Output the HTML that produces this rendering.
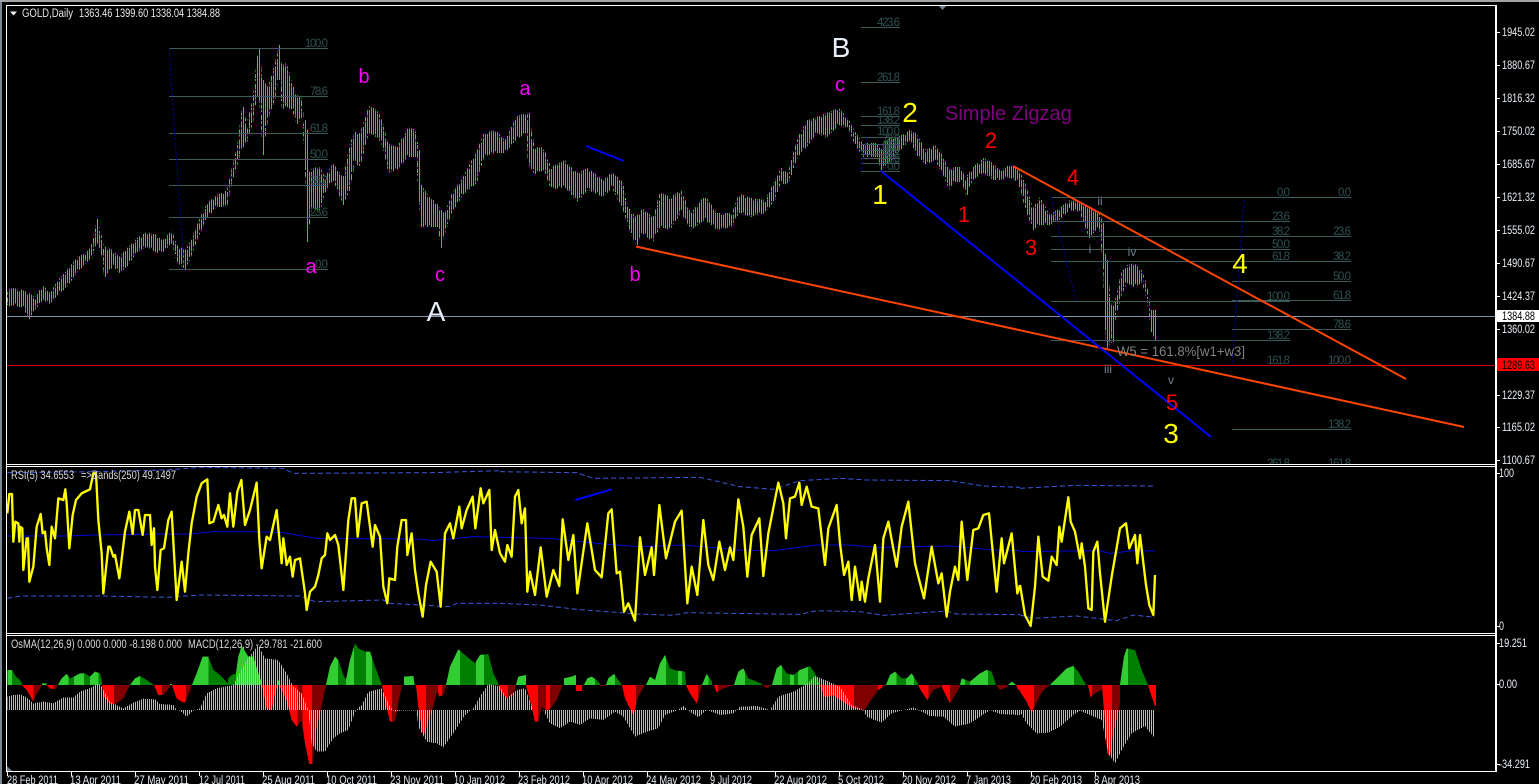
<!DOCTYPE html>
<html><head><meta charset="utf-8"><title>GOLD,Daily</title>
<style>
html,body{margin:0;padding:0;background:#000;width:1539px;height:784px;overflow:hidden}
svg{display:block;font-family:"Liberation Sans",sans-serif}
.ax text{fill:#e8eef4;font-size:11.5px}
.fb text{fill:#2f4f4f;font-size:11.5px;text-anchor:end}
.fl line{stroke:#3c5c5c;stroke-width:1;shape-rendering:crispEdges}
.mg text{fill:#f0f;font-size:20px;text-anchor:middle}
.rd text{fill:#f00;font-size:22px;text-anchor:middle}
.yl text{fill:#ff0;font-size:28px;text-anchor:middle}
.wt text{fill:#e6eefa;font-size:28px;text-anchor:middle}
.rm text{fill:#708090;font-size:12px;text-anchor:middle}
.dt text{fill:#e8eef4;font-size:11.5px}
</style></head><body>
<svg width="1539" height="784" viewBox="0 0 1539 784" xmlns="http://www.w3.org/2000/svg">
<defs>
<pattern id="b" patternUnits="userSpaceOnUse" width="2" height="4"><rect x="1" y="0" width="1" height="4" fill="#1fe01f" shape-rendering="crispEdges"/></pattern>
<pattern id="g" patternUnits="userSpaceOnUse" width="6" height="12"><rect x="3" y="0" width="3" height="12" fill="#bcbcbc" shape-rendering="crispEdges"/></pattern>
<clipPath id="h4">
<polygon points="22,675 22,630 36,630 48,650 60,660 66,672 66,675"/>
<polygon points="66,675 80,690 95,715 100,725 105,710 115,695 126,675"/>
<polygon points="126,675 126,670 140,670 140,675"/>
<polygon points="140,675 150,685 165,688 174,675"/>
<polygon points="174,675 185,655 200,642 210,655 222,650 240,640 255,640 270,650 285,635 300,640 306,665 306,675"/>
<polygon points="306,675 312,710 330,730 345,733 370,715 385,685 390,675"/>
<polygon points="390,675 405,655 420,648 440,660 462,675"/>
<polygon points="462,675 475,705 490,705 510,680 510,675"/>
<polygon points="510,675 510,672 516,672 516,675"/>
<polygon points="516,675 530,715 545,725 555,728 570,690 576,675"/>
<polygon points="576,675 590,640 608,590 625,590 640,630 660,645 684,670 684,675"/>
<polygon points="684,675 684,655 695,645 708,640 715,590 725,558 745,590 760,590 775,640 786,670 786,675"/>
<polygon points="786,675 800,745 815,750 825,700 832,675"/>
<polygon points="832,675 832,662 838,662 838,675"/>
<polygon points="838,675 860,720 875,780 890,800 905,780 915,850 928,912 938,912 950,800 965,740 978,675"/>
<polygon points="978,675 990,620 1005,590 1015,600 1030,645 1038,660 1050,600 1065,550 1075,565 1095,575 1110,575 1125,620 1140,660 1146,675"/>
<polygon points="1146,675 1155,720 1170,785 1185,785 1195,730 1206,675"/>
<polygon points="1212,675 1212,650 1240,648 1244,675"/>
<polygon points="1248,675 1255,740 1270,830 1285,780 1300,740 1312,690 1318,710 1330,705 1338,675"/>
<polygon points="1338,675 1350,620 1375,568 1395,585 1425,610 1440,585 1465,582 1480,640 1495,670 1495,675"/>
<polygon points="1495,675 1495,680 1500,680 1500,675"/>
</clipPath>
<clipPath id="h5">
<polygon points="0,675 0,690 20,715 40,705 48,675"/>
<polygon points="48,675 55,650 78,645 78,675"/>
<polygon points="78,675 90,720 105,785 115,785 125,740 138,750 150,748 170,720 186,680 186,675"/>
<polygon points="192,675 192,655 215,650 228,645 228,675"/>
<polygon points="228,675 228,693 246,693 246,675"/>
<polygon points="252,675 262,655 275,650 290,660 300,672 300,675"/>
<polygon points="300,675 300,678 318,678 318,675"/>
<polygon points="318,675 325,655 342,642 355,660 366,675"/>
<polygon points="366,675 375,715 400,765 415,710 432,680 432,675"/>
<polygon points="438,675 450,650 465,660 480,610 495,585 510,625 530,632 555,635 558,675"/>
<polygon points="558,675 570,700 590,730 600,700 606,675"/>
<polygon points="606,675 620,642 636,665 636,675"/>
<polygon points="642,675 650,697 670,685 702,675"/>
<polygon points="702,675 715,635 730,625 745,655 770,665 786,672 786,675"/>
<polygon points="786,675 800,685 816,675"/>
<polygon points="816,675 830,625 843,615 860,640 880,645 900,630 930,618 945,640 960,675"/>
<polygon points="960,675 975,712 1000,705 1030,725 1060,745 1092,752 1110,725 1135,690 1158,675"/>
<polygon points="1158,675 1170,645 1185,635 1205,655 1220,655 1235,640 1254,670 1254,675"/>
<polygon points="1254,675 1265,695 1282,720 1300,690 1325,680 1350,730 1380,680 1380,675"/>
<polygon points="1380,675 1385,655 1410,665 1440,640 1460,630 1475,635 1488,675"/>
<polygon points="1488,675 1500,690 1524,680 1524,675"/>
<polygon points="1524,675 1536,665 1548,675"/>
<polygon points="1548,675 1555,690 1560,690 1560,675"/>
</clipPath>
<clipPath id="h6">
<polygon points="0,675 0,695 20,725 35,758 55,715 70,690 90,675"/>
<polygon points="90,675 115,650 140,625 160,618 175,635 198,675"/>
<polygon points="204,675 212,712 225,700 246,690 246,675"/>
<polygon points="246,675 255,790 262,880 270,890 280,820 300,735 300,675"/>
<polygon points="300,675 312,590 320,565 345,570 365,630 384,675"/>
<polygon points="384,675 395,710 405,738 408,738 408,675"/>
</clipPath>
</defs>

<rect width="1539" height="784" fill="#000"/>
<rect x="0" y="0" width="1539" height="2" fill="#a4a4a4"/>
<rect x="0" y="2" width="2" height="782" fill="#7c8894"/>

<!-- price bars -->
<polygon fill="url(#b)" stroke="#000" stroke-width="4" stroke-dasharray="2 3 1 5 3 2 1 4 2 6" shape-rendering="crispEdges" points="7,290 13,288 23,290 29,293 35,297 43,285 50,293 58,280 67,270 77,257 87,252 92,243 97,219 102,237 104,247 113,250 119,257 127,248 137,238 147,232 157,235 163,240 172,230 177,245 185,250 190,242 198,222 207,203 217,195 227,190 232,167 237,147 242,107 247,122 253,97 257,57 259,49 263,80 268,87 275,63 279,45 282,65 287,63 292,83 297,95 302,98 304,120 306,130 308,173 312,168 320,167 325,177 333,163 343,177 350,143 355,132 360,133 369,106 378,110 383,123 388,143 397,147 408,127 416,130 419,150 421,185 430,197 438,205 441,210 445,213 452,193 463,177 477,150 484,133 495,130 505,140 516,117 526,112 528,113 535,147 544,148 551,167 565,160 577,173 588,168 603,180 612,172 623,182 628,207 636,217 642,208 653,217 660,192 670,197 681,190 691,213 705,195 717,213 732,213 739,193 751,198 765,200 775,180 781,168 788,173 791,160 798,137 807,120 817,117 826,113 839,108 849,120 854,130 863,143 877,143 881,150 888,137 898,137 910,130 916,133 926,150 935,145 944,157 949,170 955,167 961,167 966,177 973,167 984,158 993,163 999,170 1010,165 1018,168 1025,182 1033,208 1040,197 1050,215 1059,208 1070,200 1080,202 1089,207 1099,212 1103,223 1106,260 1112,307 1116,297 1121,273 1127,265 1134,263 1142,270 1147,285 1151,310 1156,310 1156,340 1151,332 1147,300 1142,283 1134,287 1127,283 1121,297 1116,317 1112,342 1106,348 1103,268 1099,227 1089,238 1080,213 1070,210 1059,220 1050,225 1040,225 1033,230 1025,208 1018,182 1010,178 999,180 993,180 984,173 973,180 966,195 961,182 955,182 949,190 944,177 935,160 926,165 916,155 910,140 898,153 888,163 881,170 877,157 863,157 854,143 849,130 839,125 826,138 817,133 807,147 798,157 791,175 788,185 781,183 775,200 765,213 751,217 739,213 732,227 717,230 705,220 691,230 681,213 670,230 660,227 653,242 642,233 636,245 628,227 623,210 612,188 603,197 588,190 577,202 565,187 551,190 544,170 535,175 528,163 526,133 516,140 505,153 495,153 484,157 477,183 463,195 452,213 445,233 441,248 438,227 430,227 421,227 419,200 416,157 408,157 397,170 388,173 383,147 378,138 369,133 360,167 355,163 350,190 343,205 333,180 325,193 320,212 312,207 308,242 306,193 304,147 302,117 297,125 292,110 287,107 282,110 279,78 275,100 268,120 263,155 259,97 257,97 253,123 247,143 242,147 237,167 232,183 227,207 217,207 207,218 198,238 190,260 185,269 177,263 172,243 163,252 157,253 147,247 137,252 127,267 119,273 113,267 104,277 102,257 97,243 92,257 87,262 77,273 67,287 58,295 50,304 43,300 35,310 29,319 23,308 13,305 7,307"/>
<!-- solid spike bars -->
<path stroke="#1fe01f" stroke-width="1" fill="none" shape-rendering="crispEdges" d="M29.500 295V319M97.500 219V243M105.500 247V277M185.500 250V269M243.500 107V147M257.500 57V97M259.500 49V97M263.500 80V155M279.500 45V78M305.500 120V170M307.500 130V242M343.500 177V205M419.500 150V200M421.500 185V227M441.500 210V248M529.500 113V163M637.500 217V245M791.500 160V175M881.500 150V170M967.500 177V195M1033.500 208V230M1089.500 207V238M1103.500 223V268M1105.500 255V330M1107.500 260V348M1109.500 300V340M1113.500 307V342M1151.500 310V332M1153.500 310V336M1155.500 310V340"/>

<!-- price lines -->
<rect x="7" y="316" width="1488" height="1" fill="#8494a4"/>
<rect x="7" y="365" width="1488" height="1" fill="#d80000"/>

<!-- fibonacci lines -->
<g class="fl">
<line x1="169" x2="328" y1="48.5" y2="48.5"/><line x1="169" x2="328" y1="96.5" y2="96.5"/><line x1="169" x2="328" y1="133.5" y2="133.5"/><line x1="169" x2="328" y1="159.5" y2="159.5"/><line x1="169" x2="328" y1="185.5" y2="185.5"/><line x1="169" x2="328" y1="217.5" y2="217.5"/><line x1="169" x2="328" y1="269.5" y2="269.5"/>
<line x1="861" x2="900" y1="27.5" y2="27.5"/><line x1="861" x2="900" y1="82.5" y2="82.5"/><line x1="861" x2="900" y1="116.5" y2="116.5"/><line x1="861" x2="900" y1="125.5" y2="125.5"/><line x1="861" x2="900" y1="137.5" y2="137.5"/><line x1="861" x2="900" y1="144.5" y2="144.5"/><line x1="861" x2="900" y1="150.5" y2="150.5"/><line x1="861" x2="900" y1="154.5" y2="154.5"/><line x1="861" x2="900" y1="158.5" y2="158.5"/><line x1="861" x2="900" y1="163.5" y2="163.5"/><line x1="861" x2="900" y1="171.5" y2="171.5"/>
<line x1="1051" x2="1351" y1="197.5" y2="197.5"/><line x1="1051" x2="1290" y1="221.5" y2="221.5"/><line x1="1051" x2="1351" y1="236.5" y2="236.5"/><line x1="1051" x2="1290" y1="249.5" y2="249.5"/><line x1="1051" x2="1351" y1="261.5" y2="261.5"/><line x1="1051" x2="1290" y1="301.5" y2="301.5"/><line x1="1051" x2="1290" y1="340.5" y2="340.5"/>
<line x1="1232" x2="1351" y1="281.5" y2="281.5"/><line x1="1232" x2="1351" y1="300.5" y2="300.5"/><line x1="1232" x2="1351" y1="329.5" y2="329.5"/><line x1="1232" x2="1351" y1="429.5" y2="429.5"/>
</g>
<g class="fb">
<text x="328" y="47" textLength="23">100.0</text><text x="328" y="95" textLength="18">78.6</text><text x="328" y="132" textLength="18">61.8</text><text x="328" y="158" textLength="18">50.0</text><text x="328" y="184" textLength="18">38.2</text><text x="328" y="216" textLength="18">23.6</text><text x="328" y="268" textLength="13">0.0</text>
<text x="900" y="26" textLength="23">423.6</text><text x="900" y="81" textLength="23">261.8</text><text x="900" y="115" textLength="23">161.8</text><text x="900" y="124" textLength="23">138.2</text><text x="900" y="135" textLength="23">100.0</text><text x="900" y="143" textLength="18">78.6</text><text x="900" y="149" textLength="18">61.8</text><text x="900" y="153" textLength="18">50.0</text><text x="900" y="157" textLength="18">38.2</text><text x="900" y="162" textLength="18">23.6</text><text x="900" y="170" textLength="13">0.0</text>
<text x="1290" y="196" textLength="13">0.0</text><text x="1290" y="220" textLength="18">23.6</text><text x="1290" y="235" textLength="18">38.2</text><text x="1290" y="248" textLength="18">50.0</text><text x="1290" y="260" textLength="18">61.8</text><text x="1290" y="300" textLength="23">100.0</text><text x="1290" y="339" textLength="23">138.2</text><text x="1290" y="364" textLength="23">161.8</text><text x="1290" y="467" textLength="23">261.8</text>
<text x="1351" y="196" textLength="13">0.0</text><text x="1351" y="235" textLength="18">23.6</text><text x="1351" y="260" textLength="18">38.2</text><text x="1351" y="280" textLength="18">50.0</text><text x="1351" y="299" textLength="18">61.8</text><text x="1351" y="328" textLength="18">78.6</text><text x="1351" y="364" textLength="23">100.0</text><text x="1351" y="428" textLength="23">138.2</text><text x="1351" y="467" textLength="23">161.8</text>
</g>
<!-- fib trend dots -->
<g stroke="#000090" stroke-width="1" stroke-dasharray="3 2" fill="none">
<path d="M169 48L184 267"/><path d="M861 170L867 137"/><path d="M1051 197L1076 301"/><path d="M1244 200L1232 365"/>
</g>

<!-- trend lines -->
<g fill="none" stroke-width="2">
<path d="M636 246.500L1464 427" stroke="#ff4500"/>
<path d="M1013 166L1406 379" stroke="#ff4500"/>
<path d="M881 171L1211 437" stroke="#0000ff"/>
<path d="M586 146L624 161" stroke="#0000ff"/>
</g>

<!-- labels -->
<g class="mg">
<text x="364" y="83">b</text><text x="311" y="273">a</text><text x="525" y="95">a</text><text x="440" y="281">c</text><text x="635" y="281">b</text><text x="840" y="91">c</text>
</g>
<g class="wt"><text x="841" y="57">B</text><text x="436" y="321">A</text></g>
<g class="yl"><text x="880" y="204">1</text><text x="910" y="122">2</text><text x="1240" y="273">4</text><text x="1171" y="443">3</text></g>
<g class="rd"><text x="991" y="148">2</text><text x="964" y="222">1</text><text x="1073" y="185">4</text><text x="1031" y="255">3</text><text x="1172" y="410">5</text></g>
<text x="945" y="120" font-size="20" fill="#800080">Simple Zigzag</text>
<g class="rm"><text x="1100" y="205">ii</text><text x="1090" y="253">i</text><text x="1132" y="256">iv</text><text x="1108" y="373">iii</text><text x="1171" y="384">v</text></g>
<text x="1117" y="356" font-size="14" fill="#808080" textLength="128" lengthAdjust="spacingAndGlyphs">W5 = 161.8%[w1+w3]</text>

<!-- header -->
<polygon points="10,11.500 17,11.500 13.500,15.500" fill="#f0f0f0"/>
<text x="22" y="17" font-size="11.500" fill="#e8e8e8" textLength="51" lengthAdjust="spacingAndGlyphs">GOLD,Daily</text>
<text x="79" y="17" font-size="11.500" fill="#e8e8e8" textLength="141" lengthAdjust="spacingAndGlyphs">1363.46 1399.60 1338.04 1384.88</text>
<polygon points="938,5 947,5 942.500,10" fill="#708090"/>

<!-- RSI pane -->
<rect x="7" y="465" width="1488" height="168" fill="#000"/>
<g fill="none">
<g transform="translate(0,460) scale(.33333)">
<polyline stroke="#3a58e0" stroke-width="3" stroke-dasharray="15 9" points="22,38 280,35 500,30 600,22 850,25 880,40 1300,38 1500,32"/>
<polyline stroke="#3a58e0" stroke-width="3" stroke-dasharray="15 9" points="22,415 60,408 300,408 500,412 600,405 900,408 945,425 1150,420 1170,430 1350,440 1370,430 1500,430"/>
<polyline stroke="#0000e0" stroke-width="3" points="22,228 200,228 280,225 480,222 570,222 640,215 760,215 850,218 950,235 1250,237 1300,242 1420,230 1500,232"/>
<polyline stroke="#ff0" stroke-width="7" stroke-linejoin="round" points="22,160 28,102 36,102 40,245 46,185 55,190 58,245 60,200 67,205 70,330 80,235 84,235 88,365 100,320 110,200 122,162 128,220 135,215 140,265 148,315 155,200 165,235 175,115 190,120 196,88 200,130 208,265 218,165 228,120 245,100 270,88 280,40 288,40 295,180 305,280 310,400 325,260 330,260 340,290 345,285 358,355 375,215 388,155 398,222 405,150 415,150 428,225 435,165 450,165 455,255 462,205 465,320 472,390 482,270 492,265 505,180 515,155 522,280 530,420 545,305 555,395 565,280 575,190 590,110 605,70 622,58 628,190 640,185 655,135 665,175 672,165 682,200 690,100 700,200 712,95 724,60 735,195 750,150 770,68 778,240 785,325 800,230 810,240 830,150 845,310 850,235 860,315 870,290 878,350 885,300 900,295 915,400 920,450 930,395 945,380 955,345 965,295 975,285 982,220 990,240 1005,225 1015,255 1030,390 1045,180 1055,115 1065,115 1073,230 1085,130 1100,125 1118,260 1125,195 1140,230 1150,380 1162,430 1168,355 1185,360 1192,260 1205,180 1218,180 1222,285 1235,220 1245,330 1255,400 1268,470 1278,375 1292,305 1310,335 1322,440 1335,220 1350,190 1360,235 1378,140 1385,205 1400,150 1418,110 1426,205 1442,85 1450,130 1468,90 1475,270 1485,210 1500,280"/>
</g>
<g transform="translate(500,460) scale(.33333)">
<polyline stroke="#3a58e0" stroke-width="3" stroke-dasharray="15 9" points="0,35 230,38 280,55 600,52 720,80 820,88 900,62 1020,55 1100,60 1350,62 1450,78 1560,82"/>
<polyline stroke="#3a58e0" stroke-width="3" stroke-dasharray="15 9" points="0,430 120,435 230,448 410,462 520,466 560,458 900,463 950,452 1080,455 1150,466 1340,453 1370,462 1560,464"/>
<polyline stroke="#0000e0" stroke-width="3" points="0,232 150,235 310,252 420,260 550,255 720,270 820,272 950,255 1050,255 1130,262 1350,258 1480,270 1560,272"/>
<polyline stroke="#ff0" stroke-width="7" stroke-linejoin="round" points="0,280 15,305 22,255 35,290 45,110 55,90 65,190 75,145 82,395 90,335 105,405 122,262 140,410 160,330 178,378 188,178 205,300 220,225 232,400 262,190 285,330 305,352 325,160 335,148 350,340 360,335 372,455 385,430 405,482 420,232 435,345 455,262 462,345 478,135 498,295 525,185 545,152 562,430 575,320 592,405 610,180 625,315 640,360 658,245 675,330 690,262 700,300 715,118 730,200 742,350 755,225 778,175 790,348 805,220 835,68 850,130 858,235 870,115 885,110 898,68 905,135 920,80 935,140 955,145 975,315 985,205 1010,135 1020,250 1032,345 1045,305 1055,420 1065,320 1080,420 1085,365 1095,425 1105,355 1125,255 1140,425 1150,235 1165,185 1190,320 1205,200 1225,125 1245,310 1255,350 1272,415 1295,260 1315,370 1325,340 1340,470 1350,395 1365,320 1375,360 1385,185 1402,360 1420,210 1435,205 1450,165 1467,160 1490,395 1505,235 1512,310 1535,220 1552,400 1560,375"/>
<path d="M226 120L335 88" stroke="#0000ff" stroke-width="6"/>
</g>
<g transform="translate(1020,460) scale(.33333)">
<polyline stroke="#3a58e0" stroke-width="3" stroke-dasharray="15 9" points="0,85 165,76 405,78"/>
<polyline stroke="#3a58e0" stroke-width="3" stroke-dasharray="15 9" points="0,465 40,475 170,468 255,478 290,482 340,465 405,472"/>
<polyline stroke="#0000e0" stroke-width="3" points="0,275 240,272 270,280 340,272 405,273"/>
<polyline stroke="#ff0" stroke-width="7" stroke-linejoin="round" points="0,375 15,465 32,498 45,380 55,230 68,350 85,362 95,290 110,315 118,200 125,245 145,112 152,185 165,215 180,295 185,250 195,320 205,445 215,450 220,275 232,245 240,340 255,485 275,350 300,205 318,190 328,265 345,225 352,310 360,225 378,375 388,435 400,465 405,345"/>
</g>
</g>
<text x="11" y="479" font-size="11.5" fill="#d8d8d8" textLength="63" lengthAdjust="spacingAndGlyphs">RSI(5) 34.6553</text>
<text x="81" y="479" font-size="11.5" fill="#d8d8d8" textLength="95" lengthAdjust="spacingAndGlyphs">=&gt;Bands(250) 49.1497</text>

<!-- MACD pane -->
<rect x="7" y="636" width="1488" height="135" fill="#000"/>
<g transform="translate(0,460) scale(.33333)" shape-rendering="crispEdges">
<g clip-path="url(#h4)">
<rect x="0" y="500" width="1500" height="175" fill="#008000"/><rect x="0" y="675" width="1500" height="300" fill="#800000"/>
<path fill="#32cd32" d="M22 500H36V675H22zM126 500H140V675H126zM174 500H205V675H174zM222 500H252V675H222zM270 500H295V675H270zM390 500H420V675H390zM510 500H516V675H510zM576 500H625V675H576zM708 500H786V675H708zM832 500H838V675H832zM978 500H1014V675H978zM1038 500H1062V675H1038zM1098 500H1116V675H1098zM1212 500H1244V675H1212zM1338 500H1380V675H1338zM1428 500H1452V675H1428z"/>
<path fill="#f00" d="M66 675H100V975H66zM140 675H160V975H140zM306 675H342V975H306zM462 675H486V975H462zM516 675H558V975H516zM786 675H832V975H786zM838 675H893V975H838zM907 675H936V975H907zM1146 675H1176V975H1146zM1248 675H1278V975H1248zM1314 675H1326V975H1314zM1495 675H1500V975H1495z"/>
</g>
<polygon fill="url(#g)" points="22,750 22,710 40,705 60,703 80,712 100,730 130,725 160,730 190,712 220,712 240,695 270,685 295,670 305,680 330,725 370,745 400,728 430,716 465,718 480,732 520,735 530,750 540,752 560,770 580,752 600,745 620,700 650,685 700,675 740,600 775,555 795,595 835,600 860,640 880,680 905,700 925,750 935,850 950,875 975,875 1000,835 1020,820 1045,810 1060,770 1068,750 1085,735 1105,695 1145,685 1170,740 1185,755 1200,752 1250,752 1255,800 1280,845 1310,850 1330,862 1360,820 1395,765 1420,745 1440,710 1465,672 1500,680 1500,750"/>
</g>
<g transform="translate(500,460) scale(.33333)" shape-rendering="crispEdges">
<g clip-path="url(#h5)">
<rect x="0" y="500" width="1560" height="175" fill="#008000"/><rect x="0" y="675" width="1560" height="300" fill="#800000"/>
<path fill="#32cd32" d="M48 500H78V675H48zM192 500H228V675H192zM252 500H285V675H252zM318 500H345V675H318zM438 500H498V675H438zM534 500H546V675H534zM606 500H625V675H606zM702 500H735V675H702zM816 500H846V675H816zM870 500H882V675H870zM894 500H924V675H894zM1158 500H1190V675H1158zM1218 500H1242V675H1218zM1380 500H1395V675H1380zM1410 500H1464V675H1410zM1524 500H1548V675H1524z"/>
<path fill="#f00" d="M0 675H24V975H0zM78 675H114V975H78zM138 675H150V975H138zM228 675H248V975H228zM366 675H408V975H366zM558 675H594V975H558zM642 675H654V975H642zM960 675H1062V975H960zM1134 675H1146V975H1134zM1254 675H1286V975H1254zM1326 675H1350V975H1326zM1548 675H1560V975H1548z"/>
</g>
<polygon fill="url(#g)" points="0,750 0,680 20,715 50,690 75,685 100,750 130,750 150,790 180,805 210,785 240,795 270,775 310,780 345,755 370,770 405,830 440,815 475,805 495,765 530,752 550,738 570,755 595,772 620,750 660,765 700,760 720,740 770,738 810,750 835,710 880,695 920,672 945,648 975,660 1020,680 1055,735 1090,750 1100,770 1145,788 1175,760 1240,742 1260,752 1290,768 1330,770 1365,800 1410,790 1440,770 1470,750 1500,762 1560,765 1560,750"/>
</g>
<g transform="translate(1020,460) scale(.33333)" shape-rendering="crispEdges">
<g clip-path="url(#h6)">
<rect x="0" y="500" width="410" height="175" fill="#008000"/><rect x="0" y="675" width="410" height="300" fill="#800000"/>
<path fill="#32cd32" d="M90 500H162V675H90zM300 500H324V675H300z"/>
<path fill="#f00" d="M0 675H42V975H0zM204 675H216V975H204zM246 675H276V975H246zM384 675H408V975H384z"/>
</g>
<polygon fill="url(#g)" points="0,750 0,755 20,790 50,820 85,818 120,800 160,765 180,752 210,765 245,780 265,880 285,910 305,870 335,820 375,798 405,835 405,750"/>
</g>
<text x="11" y="648" font-size="11.5" fill="#d8d8d8" textLength="171" lengthAdjust="spacingAndGlyphs">OsMA(12,26,9) 0.000 0.000 -8.198 0.000</text>
<text x="188" y="648" font-size="11.5" fill="#d8d8d8" textLength="134" lengthAdjust="spacingAndGlyphs">MACD(12,26,9) -29.781 -21.600</text>

<!-- frames -->
<g fill="#fff" shape-rendering="crispEdges">
<rect x="6" y="5" width="1490" height="1"/>
<rect x="6" y="5" width="1" height="767"/>
<rect x="6" y="464" width="1490" height="1"/>
<rect x="6" y="466" width="1490" height="1"/>
<rect x="6" y="633" width="1490" height="1"/>
<rect x="6" y="635" width="1490" height="1"/>
<rect x="6" y="771" width="1490" height="1"/>
<rect x="1495" y="5" width="2" height="767"/>
</g>
<polygon points="7,766 7,771 12,771" fill="#708090"/>

<!-- date ticks -->
<path stroke="#fff" stroke-width="1" shape-rendering="crispEdges" d="M7.500 772V776M71.500 772V776M135.500 772V776M199.500 772V776M263.500 772V776M327.500 772V776M391.500 772V776M455.500 772V776M519.500 772V776M583.500 772V776M647.500 772V776M711.500 772V776M775.500 772V776M839.500 772V776M903.500 772V776M967.500 772V776M1031.500 772V776M1095.500 772V776"/>
<g class="dt">
<text x="7" y="784" textLength="51" lengthAdjust="spacingAndGlyphs">28 Feb 2011</text>
<text x="70" y="784" textLength="51" lengthAdjust="spacingAndGlyphs">13 Apr 2011</text>
<text x="134" y="784" textLength="55" lengthAdjust="spacingAndGlyphs">27 May 2011</text>
<text x="199" y="784" textLength="46" lengthAdjust="spacingAndGlyphs">12 Jul 2011</text>
<text x="262" y="784" textLength="53" lengthAdjust="spacingAndGlyphs">25 Aug 2011</text>
<text x="326" y="784" textLength="51" lengthAdjust="spacingAndGlyphs">10 Oct 2011</text>
<text x="390" y="784" textLength="54" lengthAdjust="spacingAndGlyphs">23 Nov 2011</text>
<text x="454" y="784" textLength="51" lengthAdjust="spacingAndGlyphs">10 Jan 2012</text>
<text x="518" y="784" textLength="52" lengthAdjust="spacingAndGlyphs">23 Feb 2012</text>
<text x="582" y="784" textLength="51" lengthAdjust="spacingAndGlyphs">10 Apr 2012</text>
<text x="646" y="784" textLength="55" lengthAdjust="spacingAndGlyphs">24 May 2012</text>
<text x="710" y="784" textLength="42" lengthAdjust="spacingAndGlyphs">9 Jul 2012</text>
<text x="774" y="784" textLength="53" lengthAdjust="spacingAndGlyphs">22 Aug 2012</text>
<text x="838" y="784" textLength="46" lengthAdjust="spacingAndGlyphs">5 Oct 2012</text>
<text x="902" y="784" textLength="54" lengthAdjust="spacingAndGlyphs">20 Nov 2012</text>
<text x="966" y="784" textLength="45" lengthAdjust="spacingAndGlyphs">7 Jan 2013</text>
<text x="1030" y="784" textLength="52" lengthAdjust="spacingAndGlyphs">20 Feb 2013</text>
<text x="1094" y="784" textLength="46" lengthAdjust="spacingAndGlyphs">8 Apr 2013</text>
</g>

<!-- right axis -->
<path stroke="#fff" stroke-width="1" shape-rendering="crispEdges" d="M1497 32.500H1500M1497 65.500H1500M1497 98.500H1500M1497 131.500H1500M1497 164.500H1500M1497 197.500H1500M1497 230.500H1500M1497 263.500H1500M1497 296.500H1500M1497 329.500H1500M1497 395.500H1500M1497 427.500H1500M1497 460.500H1500M1497 473.500H1500M1497 626.500H1500M1497 643.500H1500M1497 684.500H1500M1497 764.500H1500"/>
<rect x="1497" y="310" width="42" height="12" fill="#fff"/>
<rect x="1497" y="358" width="42" height="13" fill="#f00"/>
<g class="ax">
<text x="1502" y="36" textLength="33" lengthAdjust="spacingAndGlyphs">1945.02</text>
<text x="1502" y="69" textLength="33" lengthAdjust="spacingAndGlyphs">1880.67</text>
<text x="1502" y="102" textLength="33" lengthAdjust="spacingAndGlyphs">1816.32</text>
<text x="1502" y="135" textLength="33" lengthAdjust="spacingAndGlyphs">1750.02</text>
<text x="1502" y="168" textLength="33" lengthAdjust="spacingAndGlyphs">1685.67</text>
<text x="1502" y="201" textLength="33" lengthAdjust="spacingAndGlyphs">1621.32</text>
<text x="1502" y="234" textLength="33" lengthAdjust="spacingAndGlyphs">1555.02</text>
<text x="1502" y="267" textLength="33" lengthAdjust="spacingAndGlyphs">1490.67</text>
<text x="1502" y="300" textLength="33" lengthAdjust="spacingAndGlyphs">1424.37</text>
<text x="1502" y="333" textLength="33" lengthAdjust="spacingAndGlyphs">1360.02</text>
<text x="1502" y="399" textLength="33" lengthAdjust="spacingAndGlyphs">1229.37</text>
<text x="1502" y="431" textLength="33" lengthAdjust="spacingAndGlyphs">1165.02</text>
<text x="1502" y="464" textLength="33" lengthAdjust="spacingAndGlyphs">1100.67</text>
<text x="1499" y="477" textLength="15" lengthAdjust="spacingAndGlyphs">100</text>
<text x="1499" y="630" textLength="5" lengthAdjust="spacingAndGlyphs">0</text>
<text x="1499" y="647" textLength="28" lengthAdjust="spacingAndGlyphs">19.251</text>
<text x="1499" y="688" textLength="18" lengthAdjust="spacingAndGlyphs">0.00</text>
<text x="1499" y="768" textLength="31" lengthAdjust="spacingAndGlyphs">-34.291</text>
</g>
<text x="1502" y="320" font-size="11.5" fill="#000" textLength="33" lengthAdjust="spacingAndGlyphs">1384.88</text>
<text x="1502" y="369" font-size="11.5" fill="#000" textLength="33" lengthAdjust="spacingAndGlyphs">1289.63</text>
</svg>
</body></html>
